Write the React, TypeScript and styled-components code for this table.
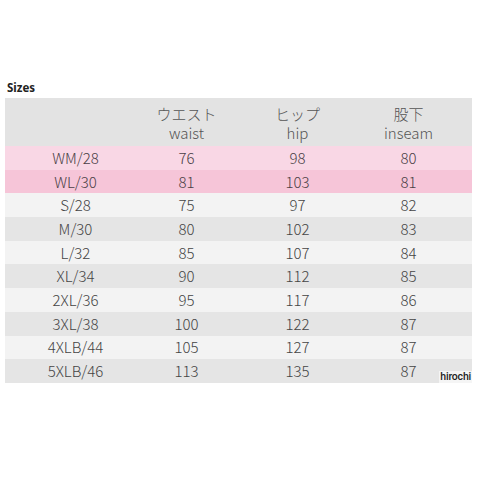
import * as React from 'react'
import styled, { createGlobalStyle } from 'styled-components'

const GlobalStyle = createGlobalStyle`
    html, body {
        margin: 0;
        padding: 0;
        background: #fff;
    }
`

const Page = styled.div`
    width: 480px;
    height: 480px;
    padding: 78px 8px 0 5px;
    box-sizing: border-box;
    font-family: 'Noto Sans CJK JP', 'Noto Sans', sans-serif;
`

const Title = styled.div`
    font-family: 'Noto Sans', sans-serif;
    font-weight: 700;
    font-size: 11.5px;
    line-height: 20px;
    color: #222;
    padding-left: 2px;
`

const Table = styled.div`
    position: relative;
    width: 467px;
`

type Tone = 'head' | 'pink' | 'rose' | 'light' | 'dark'

const tones: Record<Tone, string> = {
    head: '#e3e3e3',
    pink: '#f9d7e5',
    rose: '#f6c5d8',
    light: '#f3f3f3',
    dark: '#e5e5e5',
}

const Row = styled.div<{ $tone: Tone; $height: number }>`
    display: grid;
    grid-template-columns: repeat(4, 111px);
    padding-left: 15px;
    height: ${(p) => p.$height}px;
    align-items: center;
    background: ${(p) => tones[p.$tone]};
    color: ${(p) => (p.$tone === 'pink' || p.$tone === 'rose' ? '#4a3f45' : '#444')};
`

const Cell = styled.div`
    text-align: center;
    font-size: 15px;
    font-weight: 300;
    line-height: 18px;
`

const HeadCell = styled(Cell)`
    color: #555;
    line-height: 19px;
    padding-top: 2px;
`

const Mark = styled.div`
    position: absolute;
    right: 0;
    bottom: 0;
    font-family: 'Roboto', sans-serif;
    font-weight: 500;
    font-size: 10.5px;
    letter-spacing: -0.2px;
    color: #222;
    background: rgba(255, 255, 255, 0.6);
    padding: 0 1px;
    line-height: 12px;
`

const rows: [string, number, number, number][] = [
    ['WM/28', 76, 98, 80],
    ['WL/30', 81, 103, 81],
    ['S/28', 75, 97, 82],
    ['M/30', 80, 102, 83],
    ['L/32', 85, 107, 84],
    ['XL/34', 90, 112, 85],
    ['2XL/36', 95, 117, 86],
    ['3XL/38', 100, 122, 87],
    ['4XLB/44', 105, 127, 87],
    ['5XLB/46', 113, 135, 87],
]

const toneFor = (i: number): Tone => {
    if (i === 0) return 'pink'
    if (i === 1) return 'rose'
    return i % 2 === 0 ? 'light' : 'dark'
}

const App = () => (
    <Page>
        <GlobalStyle />
        <Title>Sizes</Title>
        <Table>
            <Row $tone="head" $height={48}>
                <HeadCell />
                <HeadCell>
                    ウエスト
                    <br />
                    waist
                </HeadCell>
                <HeadCell>
                    ヒップ
                    <br />
                    hip
                </HeadCell>
                <HeadCell>
                    股下
                    <br />
                    inseam
                </HeadCell>
            </Row>
            {rows.map((r, i) => (
                <Row key={r[0]} $tone={toneFor(i)} $height={23.7}>
                    {r.map((v, j) => (
                        <Cell key={j}>{v}</Cell>
                    ))}
                </Row>
            ))}
            <Mark>hirochi</Mark>
        </Table>
    </Page>
)

export default App
